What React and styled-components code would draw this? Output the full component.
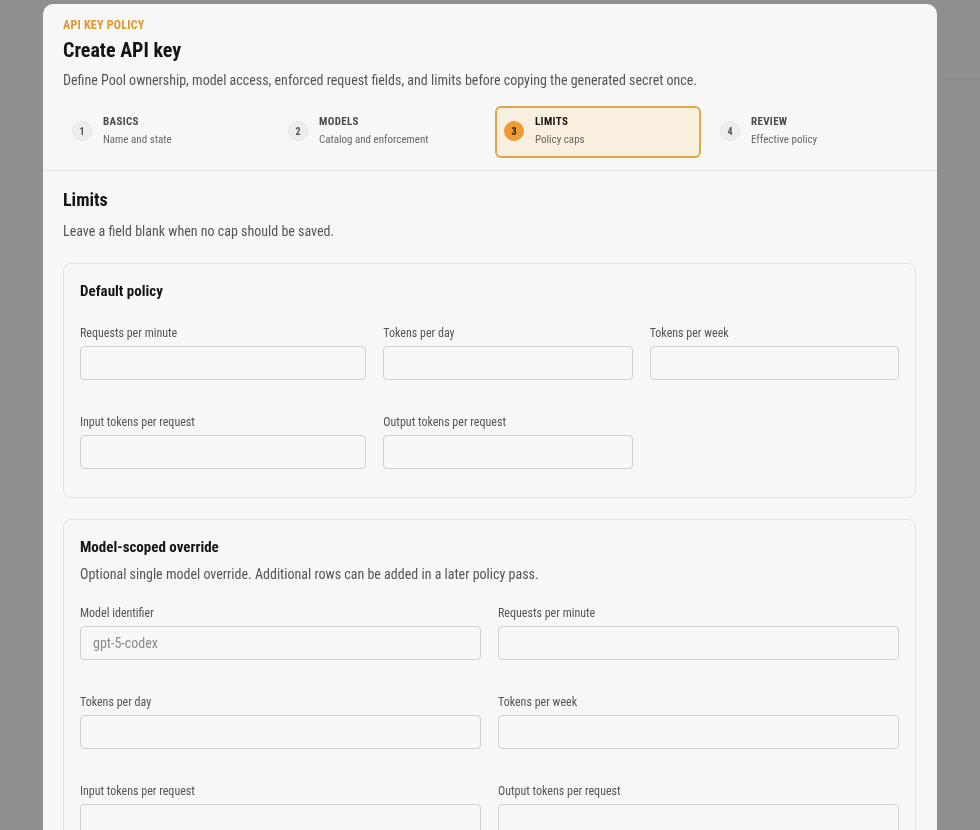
import React from 'react';
import styled, { createGlobalStyle, css } from 'styled-components';

const GlobalStyle = createGlobalStyle`
  html, body {
    margin: 0;
    padding: 0;
    background: #8f8f8f;
    font-family: Roboto, "Liberation Sans", sans-serif;
    font-stretch: 75%;
    -webkit-font-smoothing: antialiased;
  }
  * { box-sizing: border-box; }
`;

const Page = styled.div`
  height: 830px;
  overflow: hidden;
  display: flex;
  background: #8f8f8f;
`;

const Sidebar = styled.aside`
  width: 260px;
  flex: none;
`;

const PageTop = styled.div`
  flex: 1;
  height: 79px;
  border-bottom: 1px solid #878787;
`;

const Overlay = styled.div`
  position: fixed;
  inset: 0;
  padding: 4px 0 0 43px;
  overflow: hidden;
`;

const Modal = styled.div`
  width: 894px;
  min-height: 900px;
  background: #f7f7f7;
  border-radius: 10px;
  overflow: hidden;
`;

const Header = styled.header`
  padding: 13px 20px 12px;
  border-bottom: 1px solid #e2e2e2;
`;

const Eyebrow = styled.div`
  font-size: 12px;
  line-height: 16px;
  font-weight: 700;
  letter-spacing: 0.02em;
  text-transform: uppercase;
  color: #e0972d;
`;

const Title = styled.h1`
  margin: 4px 0 0;
  font-size: 20px;
  line-height: 26px;
  font-weight: 700;
  color: #141414;
`;

const Lead = styled.p`
  margin: 7px 0 0;
  font-size: 14px;
  line-height: 20px;
  color: #555;
`;

const Stepper = styled.ol`
  list-style: none;
  margin: 16px 0 0;
  padding: 0;
  display: grid;
  grid-template-columns: repeat(4, 1fr);
  gap: 10px;
`;

const Step = styled.li`
  height: 52px;
  display: flex;
  align-items: center;
  gap: 11px;
  padding: 0 8px 2px;
  border: 1px solid transparent;
  border-radius: 6px;
  ${p => p.$active && css`
    background: #f8efdf;
    border: 2px solid #dba84e;
    padding: 0 7px 2px;
  `}
`;

const StepNum = styled.span`
  flex: none;
  width: 20px;
  height: 20px;
  border-radius: 50%;
  display: grid;
  place-items: center;
  font-size: 10px;
  font-weight: 700;
  color: #555;
  background: #ededed;
  border: 1px solid #e4e4e4;
  ${p => p.$active && css`
    background: #ee9b35;
    border-color: #ee9b35;
    color: #2b1d08;
  `}
`;

const StepText = styled.div`
  display: flex;
  flex-direction: column;
  gap: 4px;
`;

const StepTitle = styled.span`
  font-size: 11px;
  line-height: 14px;
  font-weight: 700;
  letter-spacing: 0.03em;
  text-transform: uppercase;
  color: ${p => (p.$active ? '#151515' : '#4a4a4a')};
`;

const StepSub = styled.span`
  font-size: 11px;
  line-height: 14px;
  color: #666;
`;

const Body = styled.div`
  padding: 17px 21px 20px 20px;
`;

const SectionTitle = styled.h2`
  margin: 0;
  font-size: 18px;
  line-height: 24px;
  font-weight: 700;
  color: #141414;
`;

const SectionLead = styled.p`
  margin: 9px 0 0;
  font-size: 14px;
  line-height: 20px;
  color: #555;
`;

const Card = styled.section`
  margin-top: ${p => p.$top}px;
  border: 1px solid #e3e3e3;
  border-radius: 8px;
  padding: 17px 16px 28px;
`;

const CardTitle = styled.h3`
  margin: 0;
  font-size: 15px;
  line-height: 20px;
  font-weight: 700;
  color: #141414;
`;

const CardLead = styled.p`
  margin: 7px 0 0;
  font-size: 14px;
  line-height: 20px;
  color: #555;
`;

const FieldGrid = styled.div`
  margin-top: ${p => p.$top}px;
  display: grid;
  grid-template-columns: ${p => p.$cols};
  column-gap: 17px;
  row-gap: 34px;
`;

const Field = styled.label`
  display: flex;
  flex-direction: column;
  gap: 5px;
`;

const Label = styled.span`
  font-size: 12px;
  line-height: 16px;
  color: #555;
`;

const Input = styled.input`
  width: 100%;
  height: 34px;
  padding: 0 12px;
  border: 1px solid #cfcfcf;
  border-radius: 4px;
  background: #f7f7f7;
  font: inherit;
  font-size: 14px;
  color: #222;
  &::placeholder { color: #8a8a8a; }
`;

const steps = [
  { n: 1, title: 'Basics', sub: 'Name and state' },
  { n: 2, title: 'Models', sub: 'Catalog and enforcement' },
  { n: 3, title: 'Limits', sub: 'Policy caps', active: true },
  { n: 4, title: 'Review', sub: 'Effective policy' },
];

const defaultFields = [
  'Requests per minute',
  'Tokens per day',
  'Tokens per week',
  'Input tokens per request',
  'Output tokens per request',
];

const overrideFields = [
  { label: 'Model identifier', placeholder: 'gpt-5-codex' },
  { label: 'Requests per minute' },
  { label: 'Tokens per day' },
  { label: 'Tokens per week' },
  { label: 'Input tokens per request' },
  { label: 'Output tokens per request' },
];

export default function App() {
  return (
    <>
      <GlobalStyle />
      <Page>
        <Sidebar />
        <PageTop />
      </Page>
      <Overlay>
        <Modal role="dialog" aria-label="Create API key">
          <Header>
            <Eyebrow>API key policy</Eyebrow>
            <Title>Create API key</Title>
            <Lead>
              Define Pool ownership, model access, enforced request fields, and limits before copying the generated secret once.
            </Lead>
            <Stepper>
              {steps.map(s => (
                <Step key={s.n} $active={s.active}>
                  <StepNum $active={s.active}>{s.n}</StepNum>
                  <StepText>
                    <StepTitle $active={s.active}>{s.title}</StepTitle>
                    <StepSub>{s.sub}</StepSub>
                  </StepText>
                </Step>
              ))}
            </Stepper>
          </Header>
          <Body>
            <SectionTitle>Limits</SectionTitle>
            <SectionLead>Leave a field blank when no cap should be saved.</SectionLead>

            <Card $top={22}>
              <CardTitle>Default policy</CardTitle>
              <FieldGrid $top={24} $cols="286fr 249fr 249fr">
                {defaultFields.map(f => (
                  <Field key={f}>
                    <Label>{f}</Label>
                    <Input />
                  </Field>
                ))}
              </FieldGrid>
            </Card>

            <Card $top={21}>
              <CardTitle>Model-scoped override</CardTitle>
              <CardLead>Optional single model override. Additional rows can be added in a later policy pass.</CardLead>
              <FieldGrid $top={21} $cols="1fr 1fr">
                {overrideFields.map(f => (
                  <Field key={f.label}>
                    <Label>{f.label}</Label>
                    <Input placeholder={f.placeholder} />
                  </Field>
                ))}
              </FieldGrid>
            </Card>
          </Body>
        </Modal>
      </Overlay>
    </>
  );
}
